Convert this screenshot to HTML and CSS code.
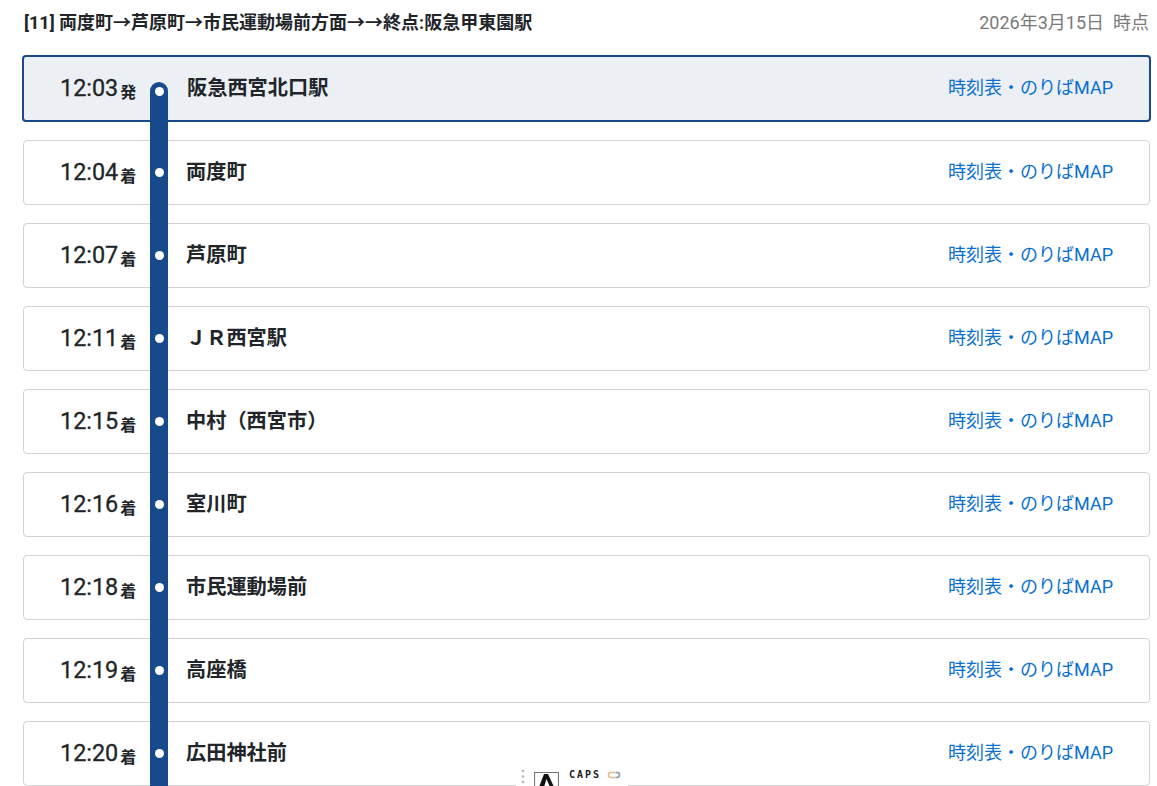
FILE: index.html
```html
<!DOCTYPE html>
<html lang="ja">
<head>
<meta charset="utf-8">
<title>路線図</title>
<link rel="stylesheet" href="styles.css">
</head>
<body>
<header class="head">
  <h1 class="title">[11] 両度町→芦原町→市民運動場前方面→→終点:阪急甲東園駅</h1>
  <p class="date">2026年3月15日&nbsp;&nbsp;時点</p>
</header>
<ol class="stops">
  <li class="stop current"><div class="time"><b>12:03</b><small>発</small></div><span class="track"><i></i></span><div class="name">阪急西宮北口駅</div><a class="link" href="#">時刻表・のりばMAP</a></li>
  <li class="stop"><div class="time"><b>12:04</b><small>着</small></div><span class="track"><i></i></span><div class="name">両度町</div><a class="link" href="#">時刻表・のりばMAP</a></li>
  <li class="stop"><div class="time"><b>12:07</b><small>着</small></div><span class="track"><i></i></span><div class="name">芦原町</div><a class="link" href="#">時刻表・のりばMAP</a></li>
  <li class="stop"><div class="time"><b>12:11</b><small>着</small></div><span class="track"><i></i></span><div class="name">ＪＲ西宮駅</div><a class="link" href="#">時刻表・のりばMAP</a></li>
  <li class="stop"><div class="time"><b>12:15</b><small>着</small></div><span class="track"><i></i></span><div class="name">中村（西宮市）</div><a class="link" href="#">時刻表・のりばMAP</a></li>
  <li class="stop"><div class="time"><b>12:16</b><small>着</small></div><span class="track"><i></i></span><div class="name">室川町</div><a class="link" href="#">時刻表・のりばMAP</a></li>
  <li class="stop"><div class="time"><b>12:18</b><small>着</small></div><span class="track"><i></i></span><div class="name">市民運動場前</div><a class="link" href="#">時刻表・のりばMAP</a></li>
  <li class="stop"><div class="time"><b>12:19</b><small>着</small></div><span class="track"><i></i></span><div class="name">高座橋</div><a class="link" href="#">時刻表・のりばMAP</a></li>
  <li class="stop"><div class="time"><b>12:20</b><small>着</small></div><span class="track"><i></i></span><div class="name">広田神社前</div><a class="link" href="#">時刻表・のりばMAP</a></li>
</ol>
<div class="caps">
  <svg class="grip" width="4" height="16" viewBox="0 0 4 16"><circle cx="2" cy="2" r="1.300"/><circle cx="2" cy="7.500" r="1.300"/><circle cx="2" cy="13" r="1.300"/></svg>
  <svg class="key" width="25" height="15" viewBox="0 0 25 15"><path d="M.5 15V.5h24V15" fill="none" stroke="#777" stroke-width="1.200"/><path d="M5 15 10 2h4l6 13h-4l-3.500-8L10 15z" fill="#111"/></svg>
  <span class="capstext">CAPS</span>
  <svg class="lamp" width="14" height="8" viewBox="0 0 14 8"><rect x="1.500" y="1.500" width="11" height="5" rx="2.500" fill="#fff" stroke="#e3b98c" stroke-width="1.500"/><path d="M9 1.500h1a2.500 2.500 0 0 1 0 5H9" fill="none" stroke="#7f9fc9" stroke-width="1.500"/></svg>
</div>
</body>
</html>
```
FILE: styles.css
```css
* { box-sizing: border-box; }
html, body { margin: 0; height: 786px; overflow: hidden; background: #fff; }
body {
  padding: 0 7px 0 23px;
  font-family: Roboto, "Noto Sans CJK JP", sans-serif;
  color: #212529;
  position: relative;
}
.head {
  display: flex;
  justify-content: space-between;
  align-items: center;
  height: 46px;
  padding: 0 1px 2px 1px;
}
.title { margin: 0; font-size: 18px; font-weight: 700; line-height: 27px; }
.date { margin: 0; font-size: 18px; line-height: 27px; color: #7a7a7a; }
.stops {
  list-style: none;
  margin: 9px 0 0;
  padding: 0;
  display: flex;
  flex-direction: column;
  gap: 18px;
}
.stop {
  display: flex;
  align-items: center;
  height: 65px;
  border: 1px solid #d3d3d3;
  border-radius: 4px;
  background: #fff;
  position: relative;
}
.stop.current {
  height: 67px;
  margin: 0 -1px;
  border: 2px solid #174a8b;
  background: #eceff4;
}
.time {
  width: 126px;
  padding-left: 36px;
  white-space: nowrap;
  display: flex;
  align-items: baseline;
}
.time b {
  font-size: 23.400px;
  font-weight: 400;
  line-height: 30px;
  -webkit-text-stroke: .3px #212529;
  position: relative;
  top: -1px;
}
.time small { font-size: 16px; font-weight: 700; margin-left: 2px; position: relative; top: 1px; }
.track { width: 18px; height: 100%; flex: none; }
.track::before {
  content: "";
  position: absolute;
  top: -1px;
  bottom: -19px;
  left: 126px;
  width: 18px;
  background: #174a8b;
}
.stop:last-child .track::before { bottom: -30px; }
.track i {
  position: absolute;
  left: 131px;
  top: 27px;
  width: 9px;
  height: 9px;
  border-radius: 50%;
  background: #fff;
}
.current .track::before {
  top: 25px;
  left: 126px;
  bottom: -20px;
  border-radius: 9px 9px 0 0;
}
.current .track i { top: 30px; left: 131px; }
.name { flex: 1; margin-left: 18px; font-size: 20.200px; font-weight: 700; line-height: 30px; position: relative; top: -1px; }
.link {
  margin-right: 36px;
  font-size: 18px;
  line-height: 28px;
  color: #0a70d0;
  text-decoration: none;
  position: relative;
  top: -1px;
}
.current .name { left: 1px; }
.caps {
  position: absolute;
  left: 516px;
  top: 768px;
  width: 112px;
  height: 18px;
  background: #fff;
  border-radius: 4px 4px 0 0;
  display: flex;
  align-items: flex-start;
}
.grip { fill: #b5b5b5; margin: 1px 0 0 5px; }
.key { margin: 4px 0 0 9px; }
.capstext {
  margin: 2px 0 0 10px;
  font: 700 10px/10px "DejaVu Sans Mono", monospace;
  letter-spacing: 2px;
  color: #222;
}
.lamp { margin: 3px 0 0 6px; }
```
